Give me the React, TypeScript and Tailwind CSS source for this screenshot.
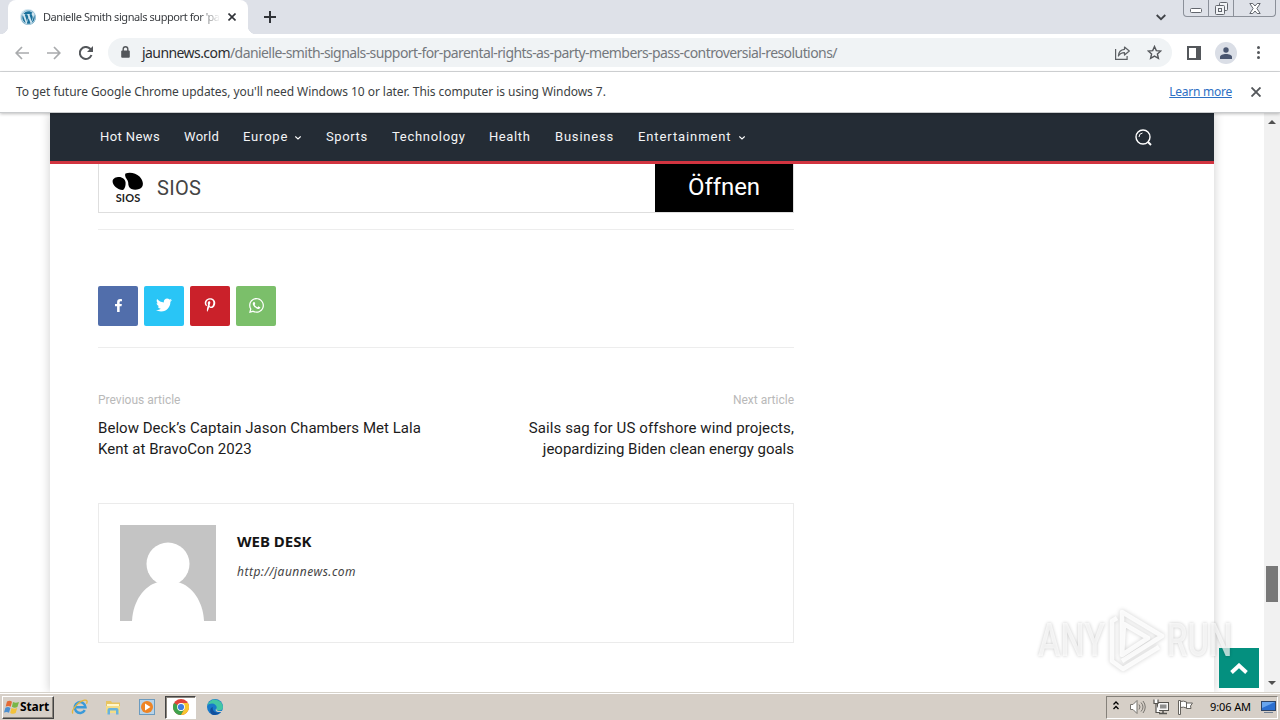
import type { ReactNode } from "react";
import { FaFacebookF, FaTwitter, FaPinterestP, FaWhatsapp, FaWordpress } from "react-icons/fa";

const UI = "font-['Noto_Sans',sans-serif]";

function TabStrip() {
  return (
    <div className="flex h-[34px] shrink-0 bg-[#dee1e8]">
      <div className="relative ml-2 flex w-[240px] items-center rounded-t-lg bg-white pl-3">
        <span className="absolute bottom-0 -left-2 h-2 w-2 bg-[radial-gradient(circle_at_0_0,#dee1e8_8px,#fff_8.5px)]" />
        <span className="absolute -right-2 bottom-0 h-2 w-2 bg-[radial-gradient(circle_at_100%_0,#dee1e8_8px,#fff_8.5px)]" />
        <span className="flex h-4 w-4 items-center justify-center rounded-full bg-[#d3e6f0]">
          <FaWordpress size={15} color="#19709b" />
        </span>
        <span className="ml-[7px] w-[177px] overflow-hidden bg-linear-to-r from-[#34373b] from-88% to-white bg-clip-text text-[11px] tracking-[-0.43px] whitespace-nowrap text-transparent">
          Danielle Smith signals support for 'pa
        </span>
        <svg className="ml-2 h-2 w-2" viewBox="0 0 8 8" stroke="#303338" strokeWidth="1.6">
          <path d="M.5.5l7 7M7.5.5l-7 7" />
        </svg>
      </div>
      <svg className="mt-[11px] ml-4 h-3 w-3" viewBox="0 0 12 12" stroke="#303338" strokeWidth="2">
        <path d="M6 0v12M0 6h12" />
      </svg>
      <svg className="mt-[14px] ml-auto h-[7px] w-[10px]" viewBox="0 0 10 7" fill="none" stroke="#404348" strokeWidth="1.8">
        <path d="M.7 1L5 5.2 9.3 1" />
      </svg>
      <div className="mr-[4px] ml-[17px] flex h-[17px] w-[93px] overflow-hidden rounded-b-[4px] border border-t-0 border-[#8b9099] text-[#62666d]">
        <div className="flex w-[25px] justify-center border-r border-[#8b9099] pt-[8px]">
          <svg className="h-[5px] w-3" viewBox="0 0 12 5" fill="#fff" stroke="currentColor">
            <rect x=".5" y=".5" width="11" height="4" rx="1" />
          </svg>
        </div>
        <div className="flex w-[25px] justify-center border-r border-[#8b9099] pt-[2px]">
          <svg className="h-[13px] w-[13px]" viewBox="0 0 13 13" fill="#f1f3f6" stroke="currentColor">
            <rect x="4.5" y=".5" width="8" height="8" rx="1" />
            <rect x=".5" y="3.5" width="9" height="9" rx="1" />
            <rect x="3.5" y="6.5" width="3" height="3" />
          </svg>
        </div>
        <div className="flex flex-1 justify-center pt-[3px]">
          <svg className="h-[11px] w-3" viewBox="0 0 12 11" fill="#fff" stroke="currentColor">
            <path d="M.8.5h3L6 3 8.200.5h3L7.900 5.500l3.300 5h-3L6 8l-2.200 2.500h-3l3.300-5z" />
          </svg>
        </div>
      </div>
    </div>
  );
}

function Toolbar() {
  return (
    <div className="flex h-[38px] shrink-0 items-center border-b border-[#d6d8da] bg-white">
      <svg className="ml-[15px] h-[14px] w-[14px]" viewBox="0 0 14 14" fill="none" stroke="#a9abad" strokeWidth="1.7">
        <path d="M14 7H1.500M7 1L1.200 7 7 13" />
      </svg>
      <svg className="ml-[18px] h-[14px] w-[14px]" viewBox="0 0 14 14" fill="none" stroke="#a9abad" strokeWidth="1.7">
        <path d="M0 7h12.500M7 1l5.800 6L7 13" />
      </svg>
      <svg className="ml-[18px] h-[14px] w-[14px]" viewBox="0 0 14 14" fill="none" stroke="#54575b" strokeWidth="2">
        <path d="M12.500 9A6 6 0 1 1 11.200 2.800L12.500 4.200" />
        <path d="M14 0v6H8z" fill="#54575b" stroke="none" />
      </svg>
      <div className="ml-[15px] flex h-[29px] w-[1064px] items-center rounded-full bg-[#f0f3f5]">
        <svg className="mb-[2px] ml-[13px] h-3 w-[9px]" viewBox="0 0 9 12" fill="none" stroke="#54575b" strokeWidth="1.4">
          <path d="M2.200 5V3a2.300 2.300 0 0 1 4.600 0v2" />
          <rect x=".2" y="4.500" width="8.600" height="7.200" rx="1" fill="#54575b" stroke="none" />
        </svg>
        <p className="ml-[12px] text-sm tracking-[-0.57px] whitespace-nowrap text-[#74787d]">
          <span className="text-[#2b2d30]">jaunnews.com</span>
          /danielle-smith-signals-support-for-parental-rights-as-party-members-pass-controversial-resolutions/
        </p>
        <svg className="ml-auto h-[14px] w-[15px]" viewBox="0 0 15 14" fill="none" stroke="#5c5f63" strokeWidth="1.200">
          <path d="M.6 3v10.300h11.500V10" />
          <path d="M9.500 1l4.800 4-4.800 4V6.600C6.600 6.600 4.800 7.500 3.400 10 3.600 6.200 5.800 3.600 9.500 3.300z" strokeLinejoin="round" />
        </svg>
        <svg className="mr-[10px] ml-[17px] h-[15px] w-[15px]" viewBox="0 0 15 15" fill="none" stroke="#54575b" strokeWidth="1.400">
          <path d="M7.500 1.500l1.800 4.100 4.500.4-3.400 3 1 4.400-3.900-2.300-3.900 2.300 1-4.400-3.400-3 4.500-.4z" />
        </svg>
      </div>
      <svg className="ml-[15px] h-[14px] w-[14px]" viewBox="0 0 14 14">
        <rect x="1" y="1" width="12" height="12" fill="#fff" stroke="#54575b" strokeWidth="2" />
        <rect x="9" y="0" width="5" height="14" fill="#54575b" />
      </svg>
      <span className="ml-[14px] flex h-[22px] w-[22px] items-center justify-center rounded-full bg-[#dadee6]">
        <svg className="h-3 w-3" viewBox="0 0 12 12" fill="#4a5670">
          <circle cx="6" cy="3" r="2.700" />
          <path d="M0 12v-2c0-2 3-3 6-3s6 1 6 3v2z" />
        </svg>
      </span>
      <svg className="ml-[20px] h-[13px] w-[3px]" viewBox="0 0 3 13" fill="#54575b">
        <circle cx="1.500" cy="1.500" r="1.500" />
        <circle cx="1.500" cy="6.500" r="1.500" />
        <circle cx="1.500" cy="11.500" r="1.500" />
      </svg>
    </div>
  );
}

function UpdateBar() {
  return (
    <div className="relative z-10 flex h-[41px] shrink-0 items-center border-b border-[#c9cbcd] bg-white pr-[19px] pb-px pl-4 text-xs shadow-[0_1px_3px_rgba(0,0,0,0.25)]">
      <p className="tracking-[-0.055px] text-[#3c3f43]">
        To get future Google Chrome updates, you'll need Windows 10 or later. This computer is using Windows 7.
      </p>
      <span className="ml-auto tracking-[-0.25px] text-[#2d70c4] underline underline-offset-1">Learn more</span>
      <svg className="ml-[19px] h-[10px] w-[10px]" viewBox="0 0 10 10" stroke="#54575b" strokeWidth="1.900">
        <path d="M.5.5l9 9M9.500.5l-9 9" />
      </svg>
    </div>
  );
}

const Caret = () => (
  <svg className="mt-[1px] h-1 w-[6px]" viewBox="0 0 6 4" fill="none" stroke="#fff" strokeWidth="1.100">
    <path d="M.3.5L3 3 5.700.5" />
  </svg>
);

function NavItem({ width, track, children, menu }: { width: string; track: string; children: ReactNode; menu?: boolean }) {
  return (
    <li className={`flex items-center whitespace-nowrap ${width} ${track}`}>
      <span className={menu ? "mr-[7px]" : ""}>{children}</span>
      {menu && <Caret />}
    </li>
  );
}

function NavBar() {
  return (
    <nav className="flex h-[51px] shrink-0 items-center border-b-[3px] border-[#d13440] bg-[#242c35] pl-[50px] text-[13px] text-[#f3f4f5]">
      <ul className="flex">
        <NavItem width="w-[84px]" track="tracking-[0.4px]">Hot News</NavItem>
        <NavItem width="w-[59px]" track="tracking-[0.3px]">World</NavItem>
        <NavItem width="w-[83px]" track="tracking-[0.8px]" menu>Europe</NavItem>
        <NavItem width="w-[66px]" track="tracking-[0.6px]">Sports</NavItem>
        <NavItem width="w-[97px]" track="tracking-[0.7px]">Technology</NavItem>
        <NavItem width="w-[66px]" track="tracking-[0.6px]">Health</NavItem>
        <NavItem width="w-[83px]" track="tracking-[0.8px]">Business</NavItem>
        <NavItem width="w-[110px]" track="tracking-[0.9px]" menu>Entertainment</NavItem>
      </ul>
      <svg className="mr-[62px] ml-auto h-[17px] w-[17px]" viewBox="0 0 17 17" fill="none" stroke="#fff" strokeWidth="1.400">
        <circle cx="8" cy="8" r="7" />
        <path d="M13 13l3 3" strokeWidth="1.900" />
        <path d="M4 8a4 4 0 0 1 3.500-4" strokeWidth="1" />
      </svg>
    </nav>
  );
}

function AdBanner() {
  return (
    <div className="flex h-[49px] border border-t-0 border-[#dedede]">
      <div className="ml-[13px] w-[32px] pt-[8px]">
        <svg className="h-[19px] w-[32px]" viewBox="0 0 32 19">
          <path d="M6 5c4-.5 7 2 7.500 5 .4 3-.5 7.500-3 8C6 18 .6 13.500.6 9.500.6 7 3 5.200 6 5z" />
          <path d="M13.500 1.500C18-.5 24 1.200 27.500 4.500c3 3 4.500 7.500 2.500 10.500-2 2.500-7 3.500-10.500 2-2.500-1-3.300-3.500-3.300-6.500 0-3-4.500-5.500-2.700-9z" />
        </svg>
        <p className="text-center font-['Lato',sans-serif] text-[11px] leading-[14px] font-bold tracking-[0.1px] text-[#222]">SIOS</p>
      </div>
      <p className="ml-[13px] pt-[1px] text-[20px] leading-[46px] tracking-[0.3px] text-[#444]">SIOS</p>
      <div className="ml-auto h-[48px] w-[138px] bg-black text-center text-2xl leading-[46px] tracking-[-0.1px] text-white">Öffnen</div>
    </div>
  );
}

function Share({ color, children }: { color: string; children: ReactNode }) {
  return <span className={`flex h-10 w-10 items-center justify-center rounded-[2px] pb-[2px] text-white ${color}`}>{children}</span>;
}

function Article() {
  return (
    <article className="ml-12 w-[696px]">
      <AdBanner />
      <div className="mt-4 border-t border-[#ededed]" />
      <div className="mt-14 flex gap-[6px]">
        <Share color="bg-[#516eab]"><FaFacebookF size={13} /></Share>
        <Share color="bg-[#29c5f6]"><FaTwitter size={16} /></Share>
        <Share color="bg-[#ca212a]"><FaPinterestP size={14} /></Share>
        <Share color="bg-[#7bbf6a]"><FaWhatsapp size={17} /></Share>
      </div>
      <div className="mt-[21px] border-t border-[#ededed]" />
      <div className="mt-[42px] flex justify-between text-[15px] leading-[21px] text-[#1c1c1c]">
        <div>
          <p className="mb-[8px] text-xs leading-[20px] text-[#b9b9b9]">Previous article</p>
          <p className="tracking-[0.04px]">Below Deck’s Captain Jason Chambers Met Lala<br />Kent at BravoCon 2023</p>
        </div>
        <div className="text-right">
          <p className="mb-[8px] text-xs leading-[20px] text-[#b9b9b9]">Next article</p>
          <p><span className="tracking-[0.1px]">Sails sag for US offshore wind projects,</span><br />jeopardizing Biden clean energy goals</p>
        </div>
      </div>
      <section className={`mt-[43px] flex h-[140px] border border-[#ebebeb] pt-[21px] pl-[21px] ${UI}`}>
        <svg className="h-24 w-24 bg-[#c4c4c4]" viewBox="0 0 96 96" fill="#fff">
          <circle cx="48" cy="39" r="21.500" />
          <path d="M12 96c1-20 12-35 26-39h20c14 4 25 19 26 39z" />
        </svg>
        <div className="ml-[21px] pt-[6px]">
          <p className="text-[15px] leading-[21px] font-bold text-[#151515]">WEB DESK</p>
          <p className="mt-[11px] text-xs leading-[18px] tracking-[0.5px] text-[#444] italic">http://jaunnews.com</p>
        </div>
      </section>
    </article>
  );
}

function Scrollbar() {
  return (
    <div className="flex w-4 shrink-0 flex-col items-center bg-[#f1f1f1] pt-[7px] pb-[7px]">
      <svg className="h-[4px] w-2" viewBox="0 0 8 4" fill="#505050"><path d="M0 4l4-4 4 4z" /></svg>
      <div className="mt-[442px] h-[36px] w-3 bg-[#787878]" />
      <svg className="mt-auto h-[4px] w-2" viewBox="0 0 8 4" fill="#505050"><path d="M0 0l4 4 4-4z" /></svg>
    </div>
  );
}

function Watermark() {
  return (
    <div className="absolute top-[607px] left-[1038px] z-20 flex h-[66px] w-[196px] items-center font-['Roboto',sans-serif] text-[46px] leading-none font-medium text-white/70 [text-shadow:0_0_4px_rgba(0,0,0,0.22)]">
      <span className="w-[66px] shrink-0 origin-left scale-x-[0.74] whitespace-nowrap">ANY</span>
      <svg className="h-[66px] w-[62px] shrink-0 drop-shadow-[0_0_2px_rgba(0,0,0,0.22)]" viewBox="0 0 62 66" fill="none" stroke="#fff" strokeOpacity=".85" strokeWidth="4.500" strokeLinejoin="round">
        <path d="M18 48V5l40 24-40 25M20 17l24 14-26 17z" />
        <path d="M13 11l-5 3v40l11 8 36-22" />
      </svg>
      <span className="ml-px w-[66px] shrink-0 origin-left scale-x-[0.71] whitespace-nowrap">RUN</span>
    </div>
  );
}

function StartFlag() {
  return (
    <svg className="h-[15px] w-4 shrink-0" viewBox="0 0 16 15">
      <path d="M3 1.500c2-1 3.500-.8 5 .2L6.700 6.700c-1.700-1-3-1-5-.2z" fill="#e36a35" />
      <path d="M9 2c2 1 3.500 1 6 0l-1.600 5c-2 1-3.700.8-5.500-.2z" fill="#79b648" />
      <path d="M1.400 7.700c2-1 3.500-.8 5 .2L5 12.800c-1.700-1-3-1-5-.2z" fill="#4c8fd0" />
      <path d="M7.500 8c2 1 3.500 1 5.700.1l-1.500 5c-2 1-3.700.8-5.500-.2z" fill="#f3c23b" />
    </svg>
  );
}

function Taskbar() {
  return (
    <footer className={`flex h-[28px] shrink-0 items-center border-t border-[#d6d2ca] bg-[#d6cfc7] shadow-[inset_0_1px_0_#fff] ${UI}`}>
      <div className="mt-px ml-[2px] flex h-[23px] w-[52px] items-center border border-t-white border-r-[#444] border-b-[#444] border-l-white pl-px shadow-[inset_-1px_-1px_0_#8a857d]">
        <StartFlag />
        <span className="text-xs font-bold tracking-[-0.1px] text-black">Start</span>
      </div>
      <svg className="ml-[17px] h-4 w-[18px]" viewBox="0 0 18 16" fill="none">
        <path d="M13.800 11.200A5.400 5.400 0 1 1 14.500 8.200H5" stroke="#3a9ad9" strokeWidth="2.500" />
        <path d="M2 14.500C-.5 12 7 2.500 13.500 1.200c3-.5 3 1.500 2 3.500" stroke="#e5b63c" strokeWidth="1.300" />
      </svg>
      <svg className="ml-[16px] h-4 w-4" viewBox="0 0 16 16">
        <path d="M1 2h5l1 1.500h8V14H1z" fill="#e8c460" />
        <path d="M2 5h12v4H2z" fill="#fff6cb" />
        <path d="M1 7h14v7H1z" fill="#f3dc87" />
        <path d="M2.500 15.500V11q0-2 2-2h7q2 0 2 2v4.500H11v-4H5v4z" fill="#68b3dd" />
      </svg>
      <svg className="ml-[18px] h-4 w-4" viewBox="0 0 16 16">
        <rect x=".5" y=".5" width="15" height="15" fill="#b8d3e8" stroke="#6b9bbf" />
        <circle cx="8" cy="8" r="6" fill="#ee8424" />
        <path d="M6 4.500v7L11.500 8z" fill="#fff" />
      </svg>
      <div className="mt-px ml-[10px] flex h-[23px] w-[31px] items-center justify-center border border-t-[#444] border-r-white border-b-white border-l-[#444] bg-white shadow-[inset_1px_1px_0_#8a857d]">
        <svg className="h-4 w-4" viewBox="0 0 16 16">
          <circle cx="8" cy="8" r="8" fill="#e1443a" />
          <path d="M8 8L1.070 4A8 8 0 0 0 8 16l3.500-6z" fill="#3fa34d" />
          <path d="M8 16a8 8 0 0 0 6.930-12H8l3.500 6z" fill="#f8c62f" />
          <circle cx="8" cy="8" r="3.900" fill="#fff" />
          <circle cx="8" cy="8" r="3.100" fill="#3f7de0" />
        </svg>
      </div>
      <svg className="ml-[11px] h-4 w-4" viewBox="0 0 16 16">
        <circle cx="8" cy="8" r="8" fill="#1879ca" />
        <path d="M.3 6.500A8 8 0 0 1 16 8c0 2.500-2 3.500-4 3.500-2.500 0-3-1-2.500-2C10.500 7 8 4.500 5 4.500c-2 0-4 .8-4.700 2z" fill="#42c6a5" />
        <path d="M5.800 8c-1 4 2.500 7 8 5A8 8 0 0 1 5 15.400C2 13 3 8.500 5.800 8z" fill="#114f9d" />
        <path d="M9.500 9.500c-.6 1.300.5 2.500 3 2.500h3l1-1v3l-3-1C9 13.500 7.500 11 9.500 9.500z" fill="#d6cfc7" />
      </svg>
      <div className="mt-px mr-[2px] ml-auto flex h-[23px] w-[172px] items-center border border-t-[#85817a] border-r-white border-b-white border-l-[#85817a] pl-[6px]">
        <svg className="mb-[3px] h-[9px] w-[6px] shrink-0" viewBox="0 0 6 9" fill="none" stroke="#000" strokeWidth="1.300">
          <path d="M.5 3.500L3 1l2.500 2.500M.5 8L3 5.500 5.500 8" />
        </svg>
        <svg className="ml-[10px] h-4 w-[17px] shrink-0" viewBox="0 0 17 16" fill="none" stroke="#77746f" strokeWidth="1">
          <path d="M1.500 5.500h2.500l4-4v13l-4-4H1.500z" fill="#fff" />
          <path d="M10 5.500q2 2.500 0 5M12 3.500q4 4.500 0 9M14 2q4.500 6 0 12" />
        </svg>
        <svg className="ml-[7px] h-4 w-4 shrink-0" viewBox="0 0 16 16" stroke="#55534f">
          <rect x="4.500" y="3.500" width="11" height="8" fill="#f5f5f5" />
          <rect x="7" y="5.500" width="6.500" height="4" fill="#8e8e8e" stroke="none" />
          <path d="M6 14.500h8M10 12v2" strokeWidth="1.500" />
          <path d="M1 .5v4h4v-4M3 5v8.500h4" fill="#fff" strokeWidth="1.200" />
        </svg>
        <svg className="ml-2 h-4 w-4 shrink-0" viewBox="0 0 16 16" fill="#fff" stroke="#66635e">
          <path d="M1.500 1.500h2v14h-2zM3.500 2.500q3-1 6 .5v6q-3-1.500-6-.5zM9.500 4h6l-2 3 .5 2.500h-4.500z" />
        </svg>
        <span className="ml-[17px] text-[11px] tracking-[-0.1px] whitespace-nowrap text-black">9:06 AM</span>
        <svg className="ml-[10px] h-[14px] w-[15px] shrink-0" viewBox="0 0 15 14">
          <rect x=".5" y="1.500" width="14" height="9" fill="#2b6fd0" stroke="#2d4467" />
          <path d="M1 2h13L1 8z" fill="#68a5ee" />
          <path d="M3 12h9v1H3z" fill="#6f7e92" />
        </svg>
      </div>
    </footer>
  );
}

export default function App() {
  return (
    <div className={`relative flex h-[720px] w-[1280px] flex-col overflow-hidden bg-white ${UI}`}>
      <TabStrip />
      <Toolbar />
      <UpdateBar />
      <div className="flex min-h-0 flex-1 font-['Roboto',sans-serif]">
        <main className="ml-[50px] flex w-[1164px] flex-col bg-white shadow-[0_0_10px_rgba(0,0,0,0.2)]">
          <NavBar />
          <Article />
        </main>
        <div className="flex w-[50px] items-end pb-[4px] pl-[5px]">
          <button className="relative flex h-10 w-10 items-center justify-center bg-[#04907f]">
            <svg className="h-[11px] w-[18px]" viewBox="0 0 18 11" fill="none" stroke="#fff" strokeWidth="3.800">
              <path d="M1.500 9.500L9 2.500l7.500 7" />
            </svg>
          </button>
        </div>
        <Scrollbar />
      </div>
      <Taskbar />
      <Watermark />
    </div>
  );
}
